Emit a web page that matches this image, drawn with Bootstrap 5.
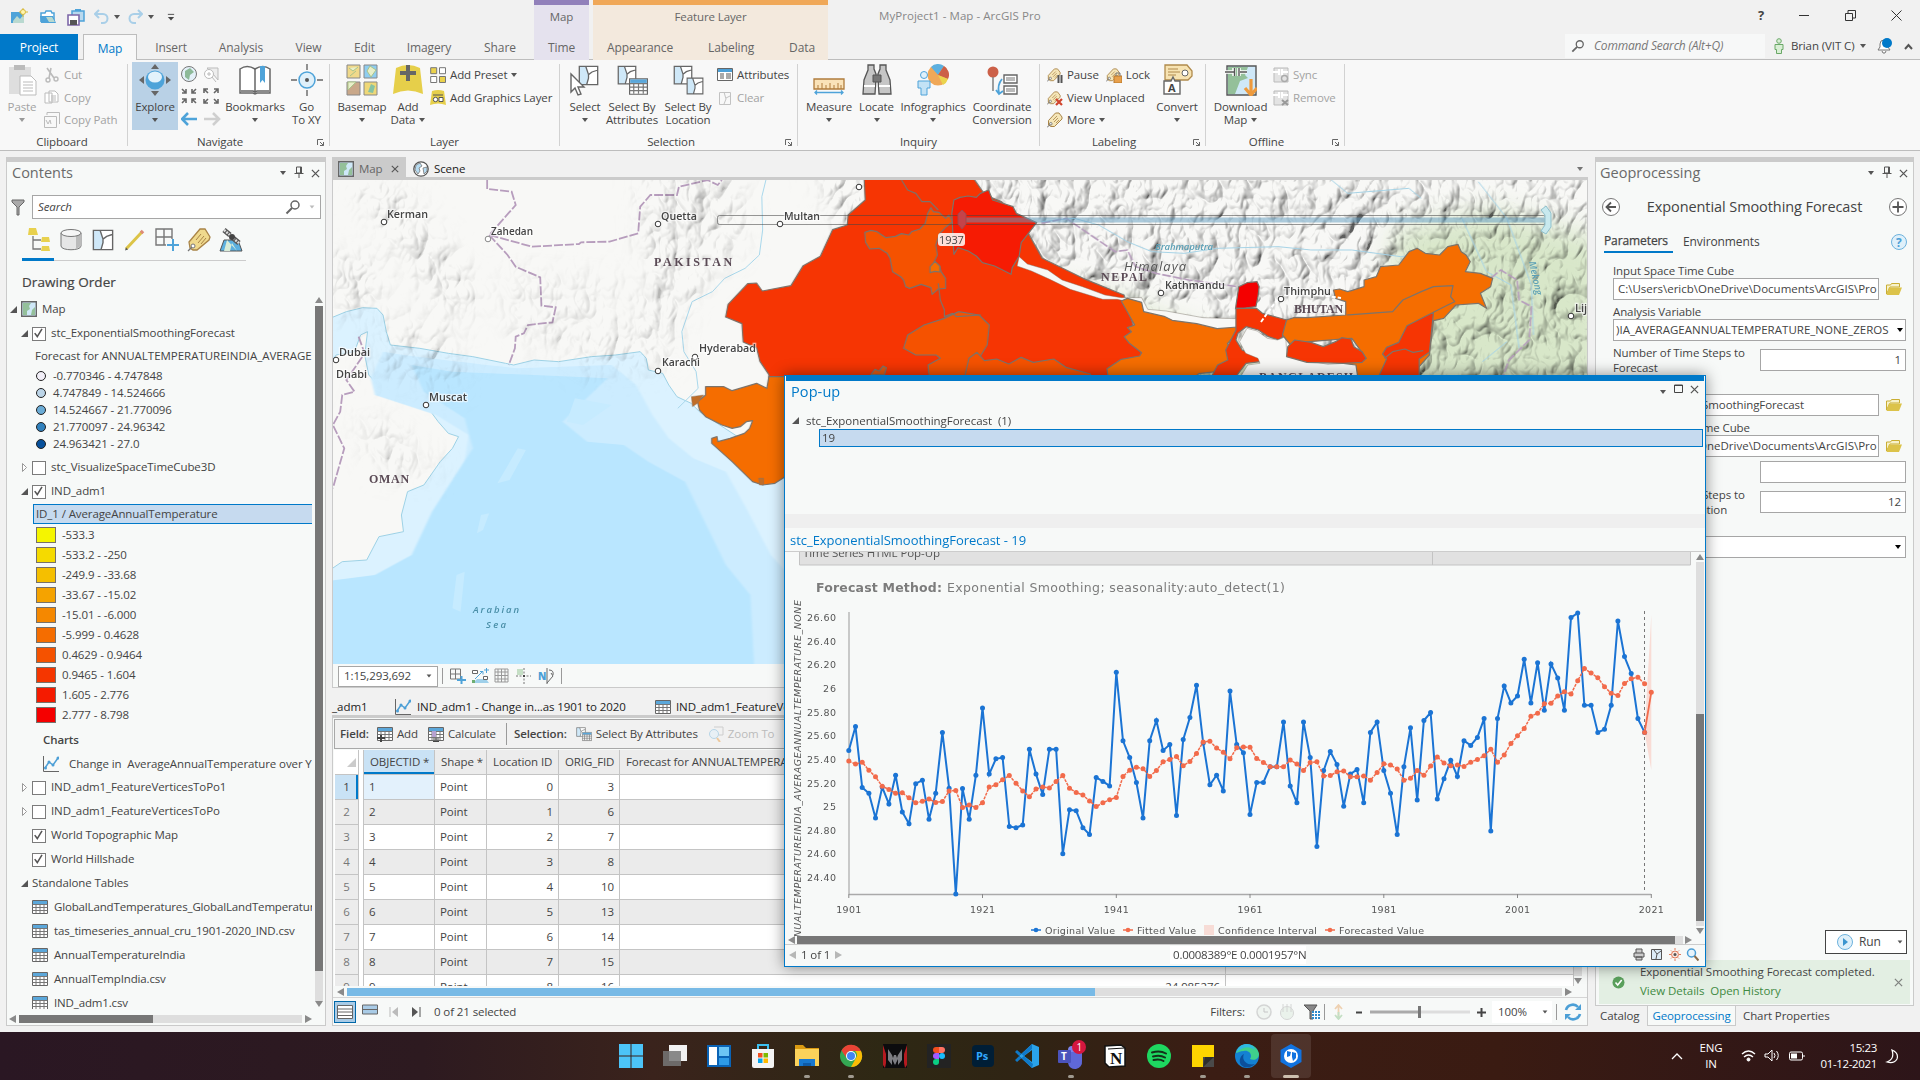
<!DOCTYPE html>
<html lang="en">
<head>
<meta charset="utf-8">
<title>MyProject1 - Map - ArcGIS Pro</title>
<link href="https://cdn.jsdelivr.net/npm/bootstrap@5.3.0/dist/css/bootstrap.min.css" rel="stylesheet">
<script src="https://cdn.jsdelivr.net/npm/bootstrap@5.3.0/dist/js/bootstrap.bundle.min.js"></script>
<style>
:root{--ink:#444;--blue:#0079c9;--line:#cacaca;--pane:#f7f9f8}
html,body{width:1920px;height:1080px;overflow:hidden}
body{background:#f1f1f1;font:11.5px/14px "Open Sans","Noto Sans",sans-serif;color:var(--ink);letter-spacing:-.1px;white-space:nowrap}
svg{display:block;flex:none}
.i16{width:16px;height:16px}.i24{width:24px;height:24px}.i32{width:32px;height:32px}
.caret{width:0;height:0;border:3.5px solid transparent;border-top:4px solid #555;border-bottom:0;flex:none}
.caret-up{width:0;height:0;border:4px solid transparent;border-bottom:6px solid #8a8a8a;border-top:0;flex:none}
.caret-dn{width:0;height:0;border:4px solid transparent;border-top:6px solid #8a8a8a;border-bottom:0;flex:none}
.caret-lt{width:0;height:0;border:4px solid transparent;border-right:7px solid #8a8a8a;border-left:0;flex:none}
.caret-rt{width:0;height:0;border:4px solid transparent;border-left:7px solid #8a8a8a;border-right:0;flex:none}
.gone{color:#a3a3a3}
/* title and tab strip */
.titlebar{height:34px}
.quick{width:534px;padding-left:10px}
.tabstrip{height:26px;border-bottom:1px solid #bdbdbd;font-size:12px;color:#666}
.tabstrip>span{height:26px;display:flex;align-items:center;justify-content:center;padding-top:2px}
.tab-project{background:var(--blue);color:#fff;width:78px}
.tab-map{width:54px;margin-left:5px;background:#f8f8f8;border:1px solid #bdbdbd;border-bottom:0;color:var(--blue)}
.ctx-map{background:#e5e2ee;border-top:5px solid #9180ba;width:55px;height:34px}
.ctx-feat{background:#f3e9dd;border-top:5px solid #f0a858;width:235px;height:34px;margin-left:4px}
.cmd{background:#f7f8f8;width:200px;height:24px;color:#777;font-style:italic;padding-left:6px}
/* ribbon */
.ribbon{height:91px;background:#f8f8f8;border-bottom:1px solid #bdbdbd}
.rgroup{position:relative;height:82px;margin-top:4px;border-right:1px solid #d2d2d2;flex:none}
.rgroup .cap{position:absolute;left:0;right:0;bottom:-3px;text-align:center}
.rgroup .launch{position:absolute;right:5px;bottom:0;width:7px;height:7px}
.rbtn{display:flex;flex-direction:column;align-items:center;text-align:center;line-height:13px;height:68px;flex:none}
.rbtn svg{margin-bottom:4px}
.rbtn .caret{margin-top:5px}
.rcol{flex:none}
.rline{height:22.5px;display:flex;align-items:center;gap:4px}
/* panes */
.pane{background:var(--pane);border:1px solid var(--line);border-top:5px solid #cbcbcb}
.pane-title{font-size:14.5px;color:#6a6a6a;height:22px;letter-spacing:0}
.toc-row{display:flex;align-items:center;height:24px;flex:none}
.chk{width:14px;height:14px;border:1.5px solid #7b7b7b;background:#fff;margin:1px 5px 0 4px;flex:none}
.tw{width:7px;height:7px;flex:none}
.swatch{width:20px;height:16px;border:1px solid #77706a;margin-right:6px}
.dot{width:10px;height:10px;border-radius:50%;border:1.5px solid #222;margin-right:7px}
.fld{background:#fff;border:1px solid #a6a6a6;height:22px;display:flex;align-items:center;overflow:hidden}
.vsep{width:1px;height:16px;background:#9a9a9a;flex:none}
/* attribute table */
.grid{display:grid;grid-template-columns:24px 5px 71px 52px 72px 61px 606px 1fr;grid-auto-rows:25px}
.grid>div{border-right:1px solid #c4c4c4;border-bottom:1px solid #c4c4c4;display:flex;align-items:center;padding:0 5px}
/* popup */
.popwin{position:absolute;left:784px;top:375px;width:922px;height:592px;background:var(--pane);border:1px solid var(--blue);box-shadow:0 0 14px rgba(0,0,0,.45)}
/* taskbar */
.taskbar{height:48px;background:linear-gradient(90deg,#2a1723 0,#2d1a20 22%,#3a231c 34%,#2e2814 46%,#2f2414 53%,#3b1d14 63%,#3a1b12 78%,#2d1519 100%);color:#fff}
.tb{width:44px;height:44px;position:relative;display:flex;align-items:center;justify-content:center}
.tb svg{width:24px;height:24px}
.tb.run::after{content:"";position:absolute;bottom:0;width:6px;height:3px;border-radius:2px;background:#a09a90}
.tb.on{background:rgba(255,255,255,.1);border-radius:4px;width:40px;margin:0 2px}
.tb.on::after{width:16px;background:#cdbfae}
</style>
</head>
<body class="d-flex flex-column">
<svg width="0" height="0" style="position:absolute">
<defs>
<symbol id="tbl" viewBox="0 0 16 16"><path d="M.5 1.5h15v13H.5z" fill="#fff" stroke="#666"/><path d="M1 2h14v3H1z" fill="#5ba7da"/><path d="M.5 5.5h15M.5 8.5h15M.5 11.500h15M4 5v9M8 5v9M12 5v9" stroke="#777" fill="none"/></symbol>
<symbol id="mapi" viewBox="0 0 16 16"><path d="M.7.7h14.600v14.600H.7z" fill="#cfe8f8" stroke="#666" stroke-width="1.400"/><path d="M2 2h8l-2 3 1 3-3 2v4H2z" fill="#94c09a"/><path d="M11 9l3-3v8h-4z" fill="#94c09a"/></symbol>
<symbol id="poly" viewBox="0 0 24 24"><path d="M1.500 1.500h21v21h-21z" fill="#fff"/><path d="M1.500 1.500h8l2 9 1 4-2 8h-9z" fill="#cfe8f8"/><path d="M1.500 1.500h21v21h-21zM9 2l3 9v4l-2 7M12 11l4-3 6-2" fill="none" stroke="#666" stroke-width="1.500"/></symbol>
<symbol id="pin" viewBox="0 0 10 12"><path d="M2.500 1h5v6h-5zM.5 7.500h9M5 7.500V12M6.500 1v6" stroke="#555" fill="none"/></symbol>
<symbol id="x" viewBox="0 0 10 10"><path d="M1 1l8 8M9 1l-8 8" stroke="#555" stroke-width="1.400"/></symbol>
<symbol id="launch" viewBox="0 0 7 7"><path d="M.5 6V.5H6M3 3l3.500 3.500M6.500 3v3.500H3" stroke="#666" fill="none"/></symbol>
<symbol id="mag" viewBox="0 0 16 16"><circle cx="10" cy="6" r="4" fill="none" stroke="#666" stroke-width="1.500"/><path d="M7 9l-5.500 5.500" stroke="#666" stroke-width="2"/></symbol>
<symbol id="line" viewBox="0 0 16 16"><path d="M.5 0v15.500H16" stroke="#666" fill="none"/><path d="M2 12l4-6 4 3 5-7" stroke="#4c9fd6" stroke-width="1.500" fill="none"/><g fill="#4c9fd6"><circle cx="2.500" cy="12" r="1.500"/><circle cx="6" cy="6" r="1.500"/><circle cx="10" cy="9" r="1.500"/><circle cx="15" cy="2" r="1.500"/></g></symbol>
<symbol id="tag" viewBox="0 0 16 16"><path d="M1.500 13V8.500l7-7.500H12l3 4v2l-7.500 7.500H4z" fill="#f5e6b8" stroke="#a98447"/><path d="M6 8l4-4M7 10l4-4M9 11l3-3" stroke="#a98447" stroke-width=".8"/><circle cx="3.800" cy="11.800" r="1.300" fill="#fff" stroke="#666" stroke-width=".8"/><path d="M0 15.500l3-3" stroke="#666"/></symbol>
<symbol id="fold" viewBox="0 0 16 12"><path d="M.5 11V2h4l1-1.500h8V4H4z" fill="#f7f2cb" stroke="#c9ae34"/><path d="M3 4.500h13L13 12H.5z" fill="#dcc34a"/></symbol>
<symbol id="tri" viewBox="0 0 7 7"><path d="M7 0v7H0z" fill="#555"/></symbol>
<symbol id="tro" viewBox="0 0 7 9"><path d="M1.500.5v8l4-4z" fill="#fff" stroke="#999"/></symbol>
<symbol id="ck" viewBox="0 0 14 14"><path d="M2 6l3 4L10.500 1" fill="none" stroke="#555" stroke-width="1.800"/></symbol>
<symbol id="globe" viewBox="0 0 16 16"><circle cx="8" cy="8" r="7.200" fill="#fff" stroke="#555" stroke-width="1.300"/><path d="M3 4l4-2 2 3-3 2 1 3-2 3-3-4zM10 7l4-1v4l-3 3z" fill="#b7dcf2" stroke="#777" stroke-width=".8"/></symbol>
</defs>
</svg>

<!-- Title bar with contextual tab headings -->
<header class="titlebar d-flex flex-none">
  <div class="quick d-flex align-items-center">
    <svg width="18" height="18" viewBox="0 0 18 18"><path d="M1 4h13v11H1z" fill="#4ea3d9"/><path d="M3 13l4-5 3 3 4-5v9H3z" fill="#b9d9d0"/><circle cx="13" cy="4" r="2.500" fill="#fff5b0" stroke="#d8b93a"/><path d="M13 0v2M13 7v2M9 4h2M16 4h2" stroke="#d8b93a"/></svg>
    <svg style="margin-left:11px" width="18" height="18" viewBox="0 0 18 18"><path d="M2 14V5h4l1-2h5l1 2h2v9" fill="#fff" stroke="#4ea3d9" stroke-width="1.500"/><path d="M1 8h13l3 7H2z" fill="#4ea3d9"/><path d="M7 9h6l3 5h-6z" fill="#b9d9d0"/></svg>
    <svg style="margin-left:9px" width="20" height="18" viewBox="0 0 20 18"><path d="M6 3h12v10H6z" fill="#b9d9ee" stroke="#4ea3d9" stroke-width="1.500"/><path d="M9 1h6v2H9z" fill="#4ea3d9"/><path d="M2 7h11v10H2z" fill="#fff" stroke="#7d67a8" stroke-width="1.600"/><path d="M4 12h7v5H4z" fill="#555"/></svg>
    <svg class="ms-2" width="15" height="16" viewBox="0 0 15 16"><path d="M1 5h8a4 4 0 010 9H7M5 1L1 5l4 4" fill="none" stroke="#a9cfe8" stroke-width="2"/></svg>
    <span class="caret" style="margin-left:5px"></span>
    <svg class="ms-2" width="15" height="16" viewBox="0 0 15 16"><path d="M14 5H6a4 4 0 000 9h2M10 1l4 4-4 4" fill="none" stroke="#a9cfe8" stroke-width="2"/></svg>
    <span class="caret" style="margin-left:5px"></span>
    <svg style="margin-left:13px" width="8" height="9" viewBox="0 0 9 9"><path d="M1 1h7" stroke="#444"/><path d="M1 4h7L4.500 8z" fill="#444"/></svg>
  </div>
  <div class="ctx-map d-flex justify-content-center" style="color:#666;padding-top:5px">Map</div>
  <div class="ctx-feat d-flex justify-content-center" style="color:#666;padding-top:5px">Feature Layer</div>
  <div class="d-flex align-items-center" style="color:#888;margin-left:51px;padding-bottom:2px;letter-spacing:.05px">MyProject1 - Map - ArcGIS Pro</div>
  <div class="ms-auto d-flex align-items-center" style="gap:35px;padding:0 18px 4px 0">
    <b style="font-size:13px">?</b>
    <svg width="11" height="11"><path d="M0 5.500h10" stroke="#333"/></svg>
    <svg width="11" height="11"><path d="M.5 3.500h7v7h-7zM3 3V.5h7.500V8H8" fill="none" stroke="#333"/></svg>
    <svg width="11" height="11"><path d="M.5.5l10 10M10.500.5l-10 10" stroke="#333"/></svg>
  </div>
</header>
<nav class="tabstrip d-flex flex-none">
  <span class="tab-project">Project</span><span class="tab-map">Map</span>
  <span style="width:68px">Insert</span><span style="width:72px">Analysis</span><span style="width:63px">View</span><span style="width:49px">Edit</span><span style="width:80px">Imagery</span><span style="width:62px">Share</span><span style="width:3px"></span>
  <span style="width:55px;background:#e5e2ee">Time</span>
  <span style="width:235px;margin-left:4px;background:#f3e9dd;justify-content:space-between;padding:2px 13px 0 14px"><i class="fst-normal">Appearance</i><i class="fst-normal">Labeling</i><i class="fst-normal">Data</i></span>
  <div class="cmd ms-auto d-flex align-items-center" style="letter-spacing:-.2px"><svg style="width:14px;height:16px;margin-right:9px"><use href="#mag"/></svg>Command Search (Alt+Q)</div>
  <div class="d-flex align-items-center" style="width:155px;height:24px;padding-left:9px;color:#444;font-size:11.500px">
    <svg width="10" height="16" viewBox="0 0 10 16" class="me-1"><circle cx="5" cy="3" r="2.300" fill="#d9efd5" stroke="#6aa867"/><path d="M1 6.500h8v5H7.500v4h-5v-4H1z" fill="#d9efd5" stroke="#6aa867"/></svg>
    &nbsp;Brian (VIT C)<span class="caret" style="margin-left:6px"></span>
    <svg width="17" height="16" viewBox="0 0 17 16" style="margin-left:10px"><path d="M2 12l2-3V6a4 4 0 018 0v3l2 3zM6 13l1 2h2l1-2" fill="#fff" stroke="#777"/><circle cx="11" cy="5" r="5" fill="#0079c9"/></svg>
    <svg width="9" height="7" viewBox="0 0 9 7" style="margin-left:11px"><path d="M1 6l3.500-4L8 6" fill="none" stroke="#555" stroke-width="2"/></svg>
  </div>
</nav>

<!-- Ribbon -->
<section class="ribbon d-flex flex-none">
  <div class="rgroup d-flex" style="width:128px">
    <div class="rbtn gone" style="width:40px;margin-left:2px"><svg class="i32" viewBox="0 0 32 32"><path d="M3 3h22v27H3z" fill="#dedede"/><path d="M8 1h11v5H8z" fill="#bbb"/><path d="M14 12h11l5 5v14H14z" fill="#fff" stroke="#bbb"/><path d="M17 18h10M17 21h10M17 24h10M17 27h10" stroke="#bbb"/></svg>Paste<i class="caret" style="border-top-color:#999"></i></div>
    <div class="rcol gone" style="margin-left:2px">
      <div class="rline"><svg class="i16" viewBox="0 0 16 16"><path d="M3 1l7 10M7 1L5 11" stroke="#bbb" stroke-width="1.600"/><circle cx="4" cy="13" r="2" fill="none" stroke="#bbb" stroke-width="1.400"/><circle cx="12" cy="12" r="2" fill="none" stroke="#bbb" stroke-width="1.400"/></svg>Cut</div>
      <div class="rline"><svg class="i16" viewBox="0 0 16 16"><path d="M1 3h7v10H1zM5 1h6l3 3v8H5z" fill="#fff" stroke="#bbb"/><path d="M7 6h5M7 8h5M7 10h5" stroke="#bbb"/></svg>Copy</div>
      <div class="rline"><svg class="i16" viewBox="0 0 16 16"><path d="M.5 4.500h12v11H.5zM3 3V.5h12.500V12" fill="none" stroke="#bbb"/><path d="M2 8l2 4 2-4 1 4" stroke="#bbb" fill="none"/></svg>Copy Path</div>
    </div>
    <div class="cap" style="right:3px">Clipboard</div>
  </div>
  <div class="rgroup d-flex" style="width:202px">
    <div class="rbtn" style="width:46px;margin-left:4px;background:#b9d1e6;margin-top:-2px;padding-top:2px"><svg class="i32" viewBox="0 0 32 32"><circle cx="16" cy="16" r="9.500" fill="#4ea3d9"/><ellipse cx="16" cy="13" rx="7" ry="5.500" fill="#e3f2fb"/><path d="M12 5h8l-4-5zM12 27h8l-4 5zM5 12v8l-5-4zM27 12v8l5-4z" fill="#666"/></svg>Explore<i class="caret"></i></div>
    <div class="rcol" style="width:46px;padding:2px 0 0 3px">
      <svg width="40" height="62" viewBox="0 0 40 62"><circle cx="8" cy="8" r="7.500" fill="#e3f0f8" stroke="#777"/><path d="M4 5l5-3 4 4-4 3-1 5-4-3z" fill="#8cb998"/><path d="M26 2h11v12l-5-6z" fill="#eee" stroke="#bbb"/><circle cx="28" cy="8" r="4.500" fill="#fff" stroke="#bbb"/><path d="M31 11l4 5M26 8h4M28 6v4" stroke="#bbb"/>
      <g stroke="#666" stroke-width="1.600" fill="none"><path d="M1 23l4 4M5 23v4H1M15 23l-4 4M11 23v4h4M1 37l4-4M1 33h4v4M15 37l-4-4M15 33h-4v4"/><path d="M23 23l4 4M23 27v-4h4M37 23l-4 4M33 23h4v4M23 37l4-4M23 33v4h4M37 37l-4-4M33 37h4v-4"/></g>
      <path d="M16 53H2M7 47l-6 6 6 6" stroke="#4ea3d9" stroke-width="2.600" fill="none"/><path d="M23 53h14M32 47l6 6-6 6" stroke="#cfcfcf" stroke-width="2.600" fill="none"/></svg>
    </div>
    <div class="rbtn" style="width:62px"><svg class="i32" viewBox="0 0 32 32"><path d="M1 29V5q7-5 15 0 8-5 15 0v24H18l-2 1-2-1z" fill="#fff" stroke="#666" stroke-width="1.500"/><path d="M16 5v24M2 27h12l2 1 2-1h12" stroke="#666" stroke-width="1.500"/><path d="M21 2h5v17l-2.500-3-2.500 3z" fill="#4ea3d9"/></svg>Bookmarks<i class="caret"></i></div>
    <div class="rbtn" style="width:41px"><svg class="i32" viewBox="0 0 32 32"><circle cx="16" cy="16" r="8" fill="#dff0fa" stroke="#4ea3d9" stroke-width="1.500"/><circle cx="16" cy="16" r="2" fill="#555"/><path d="M16 0v6M16 26v6M0 16h6M26 16h6" stroke="#666" stroke-width="1.400"/></svg>Go<br>To XY</div>
    <div class="cap" style="right:17px">Navigate</div><svg class="launch"><use href="#launch"/></svg>
  </div>
  <div class="rgroup d-flex" style="width:230px">
    <div class="rbtn" style="width:52px;margin-left:6px"><svg class="i32" viewBox="0 0 32 32"><g stroke="#888"><path d="M1 1h13v13H1z" fill="#f0d98a"/><path d="M18 1h13v13H18z" fill="#8fcdf0"/><path d="M1 18h13v13H1z" fill="#c9a88a"/><path d="M18 18h13v13H18z" fill="#efd878"/></g><path d="M3 4l4 3 5-4M4 12l6-5M24 2l-3 5 4 6 5-7zM2 18h8l-8 8z" stroke="#a9c48a" fill="#e8efc9"/><path d="M22 28l3-8 4 2-2 7z" fill="#86c3a4"/></svg>Basemap<i class="caret"></i></div>
    <div class="rbtn" style="width:40px"><svg class="i32" viewBox="0 0 32 32"><path d="M4 4q12-6 24 0l3 26q-15-7-30 0z" fill="#e6cf4a"/><path d="M16 1v16M8 9h16" stroke="#666" stroke-width="4"/></svg>Add<span class="d-flex">Data<i class="caret ms-1"></i></span></div>
    <div class="rcol" style="margin-left:2px">
      <div class="rline"><svg class="i16" viewBox="0 0 16 16"><path d="M.7.7h6v6h-6zM9.500 9.500h6v6h-6z" fill="#ebd24c" stroke="#777"/><path d="M9.500.7h6v6h-6zM.7 9.500h6v6h-6z" fill="#fff" stroke="#777"/></svg>Add Preset <i class="caret"></i></div>
      <div class="rline"><svg class="i16" viewBox="0 0 16 16"><path d="M2 1q6-2 12 0l2 14q-8-3-16 0z" fill="#e6cf4a"/><path d="M3 5h10" stroke="#555"/><circle cx="5.500" cy="9.500" r="2.200" fill="#fff" stroke="#555"/><path d="M9 7.500h4v4H9z" fill="#fff" stroke="#555"/></svg>Add Graphics Layer</div>
    </div>
    <div class="cap">Layer</div>
  </div>
  <div class="rgroup d-flex" style="width:238px">
    <div class="rbtn" style="width:40px;margin-left:5px"><svg class="i32" viewBox="0 0 32 32"><use href="#poly" x="9" y="1" width="21" height="21"/><path d="M2 10v18l4-4 3 7 3-1-3-7h6z" fill="#fff" stroke="#666" stroke-width="1.400"/></svg>Select<i class="caret"></i></div>
    <div class="rbtn" style="width:54px"><svg class="i32" viewBox="0 0 32 32"><use href="#poly" x="1" y="1" width="20" height="20"/><use href="#tbl" x="13" y="13" width="19" height="19"/></svg>Select By<br>Attributes</div>
    <div class="rbtn" style="width:58px"><svg class="i32" viewBox="0 0 32 32"><use href="#poly" x="1" y="1" width="20" height="20"/><use href="#poly" x="14" y="13" width="18" height="18"/></svg>Select By<br>Location</div>
    <div class="rcol">
      <div class="rline"><svg class="i16" viewBox="0 0 16 16"><path d="M.5 1.500h15v12H.5z" fill="#fff" stroke="#666"/><path d="M1 2h14v3H1z" fill="#4c9fd6"/><path d="M3 7h4M9 7h5M3 9h4M9 9h5M3 11h4M9 11h5" stroke="#555"/></svg>Attributes</div>
      <div class="rline gone"><svg class="i16" viewBox="0 0 16 16"><path d="M2.500 2.500h11v12h-11zM7 2l2 7-2 5M9 8l4-2" fill="none" stroke="#c2c2c2"/></svg>Clear</div>
    </div>
    <div class="cap" style="right:15px">Selection</div><svg class="launch"><use href="#launch"/></svg>
  </div>
  <div class="rgroup d-flex" style="width:242px">
    <div class="rbtn" style="width:52px;margin-left:5px"><svg class="i32" viewBox="0 0 32 32"><path d="M1 15h30v10H1z" fill="#fae3b9" stroke="#b07c3c" stroke-width="1.300"/><path d="M5 25v-4M9 25v-6M13 25v-4M17 25v-6M21 25v-4M25 25v-6M28 25v-4" stroke="#b07c3c"/><path d="M2 28.500h28M4 26.500l-2 2 2 2M28 26.500l2 2-2 2" fill="none" stroke="#4ea3d9" stroke-width="1.300"/></svg>Measure<i class="caret"></i></div>
    <div class="rbtn" style="width:43px"><svg class="i32" viewBox="0 0 32 32"><path d="M7 1h6v4l2 5v4l-1 16H2l1-14 4-10zM25 1h-6v4l-2 5v4l1 16h12l-1-14-4-10z" fill="#c6c6c6" stroke="#555" stroke-width="1.300"/><path d="M12 11h8v7h-8z" fill="#777" stroke="#555"/><path d="M3 22h11M18 22h11" stroke="#fff" stroke-width="2"/></svg>Locate<i class="caret"></i></div>
    <div class="rbtn" style="width:70px"><svg class="i32" viewBox="0 0 32 32"><circle cx="21" cy="11" r="10.500" fill="#f0a858"/><path d="M21 11L14 3a10 10 0 0113-1z" fill="#5cb0e0"/><path d="M21 11l6-9a10 10 0 014 13z" fill="#cc6048"/><path d="M21 11l10 4a10 10 0 01-5 6z" fill="#ead44e"/><circle cx="7" cy="11" r="3.500" fill="#dff0fa" stroke="#4ea3d9"/><path d="M1 17h12v7h-3v7H4v-7H1z" fill="#c3e2f5" stroke="#4ea3d9"/></svg>Infographics<i class="caret"></i></div>
    <div class="rbtn" style="width:68px"><svg class="i32" viewBox="0 0 32 32"><circle cx="7" cy="8" r="5.500" fill="#cc6048"/><path d="M7 13v14" stroke="#777" stroke-width="1.400"/><path d="M18 11h13v8H18zM18 22h13v8H18z" fill="#fff" stroke="#666" stroke-width="1.400"/><path d="M20 14h9M20 16h9M20 25h9M20 27h9" stroke="#777"/><path d="M16 15q-5 6-3 14M10 26l3 4 4-3" fill="none" stroke="#4ea3d9" stroke-width="1.800"/></svg>Coordinate<br>Conversion</div>
    <div class="cap">Inquiry</div>
  </div>
  <div class="rgroup d-flex" style="width:166px">
    <div class="rcol" style="margin-left:7px;width:105px">
      <div class="rline"><svg class="i16" viewBox="0 0 16 16"><use href="#tag" width="14" height="16"/><path d="M11.500 8v8M14.500 8v8" stroke="#555" stroke-width="2"/></svg>Pause<svg class="i16" style="margin-left:3px" viewBox="0 0 16 16"><use href="#tag" width="14" height="16"/><path d="M8 9h8v7H8z" fill="#e8a04b" stroke="#b8792c"/><path d="M10 9V6h4v3" fill="none" stroke="#777"/></svg>Lock</div>
      <div class="rline"><svg class="i16" viewBox="0 0 16 16"><use href="#tag" width="14" height="16"/><path d="M9 9l6 6M15 9l-6 6" stroke="#d0442c" stroke-width="2.200"/></svg>View Unplaced</div>
      <div class="rline"><svg class="i16"><use href="#tag"/></svg>More <i class="caret"></i></div>
    </div>
    <div class="rbtn" style="width:50px"><svg class="i32" viewBox="0 0 32 32"><path d="M4 1h22l5 6v5l-4 4H4z" fill="#f7e3b2" stroke="#b08a4c" stroke-width="1.300"/><path d="M7 5h10M7 8h12M7 11h8" stroke="#b08a4c"/><circle cx="24" cy="9" r="3" fill="#fff" stroke="#666"/><path d="M3 17h7l2-4 2 4h5v13H3z" fill="#fff" stroke="#666" stroke-width="1.400"/><text x="7" y="28" font-size="11" font-weight="700" fill="#444">A</text></svg>Convert<i class="caret"></i></div>
    <div class="cap" style="right:17px">Labeling</div><svg class="launch"><use href="#launch"/></svg>
  </div>
  <div class="rgroup d-flex" style="width:139px">
    <div class="rbtn" style="width:59px;margin-left:5px"><svg class="i32" viewBox="0 0 32 32"><path d="M2 2h29v29H2z" fill="#cfe8f8" stroke="#555" stroke-width="1.400"/><path d="M3 3h20l-3 8 3 3-8 3-5 13H3z" fill="#94c09a"/><path d="M0 8h9M15 8h7M9 4v8M14 4v8" stroke="#fff" stroke-width="3.500"/><path d="M0 8h9M15 8h7M9.500 4v8M14 4v8" stroke="#555" stroke-width="1.400"/><path d="M26 15v15M20 24l6 7 6-7" fill="none" stroke="#ee9a3d" stroke-width="3.200"/></svg>Download<span class="d-flex">Map<i class="caret ms-1"></i></span></div>
    <div class="rcol gone" style="margin-left:3px">
      <div class="rline"><svg class="i16" viewBox="0 0 16 16"><path d="M1 1h14v14H1z" fill="#e3e3e3" stroke="#bbb"/><path d="M0 5h6M10 5h5M6 2v6M9 2v6" stroke="#fff" stroke-width="2"/><circle cx="11.500" cy="11.500" r="3" fill="none" stroke="#aaa" stroke-width="1.400"/></svg>Sync</div>
      <div class="rline"><svg class="i16" viewBox="0 0 16 16"><path d="M1 1h14v14H1z" fill="#e3e3e3" stroke="#bbb"/><path d="M0 5h6M10 5h5M6 2v6M9 2v6" stroke="#fff" stroke-width="2"/><path d="M9 10l6 5M15 10l-6 5" stroke="#999" stroke-width="2"/></svg>Remove</div>
    </div>
    <div class="cap" style="right:17px">Offline</div><svg class="launch"><use href="#launch"/></svg>
  </div>
</section>

<main class="d-flex" style="height:881px;padding:6px 6px 0 6px;flex:none">
  <!-- Contents pane -->
  <aside class="pane d-flex flex-column" style="width:320px;height:869px">
    <div class="d-flex align-items-center pane-title" style="padding:0 5px 0 5px">Contents
      <i class="caret ms-auto"></i><svg class="ms-2" width="10" height="12" style="margin-top:-3px"><use href="#pin"/></svg><svg style="margin-left:7px" width="9" height="9"><use href="#x"/></svg></div>
    <div class="d-flex align-items-center" style="margin:11px 4px 0 4px">
      <svg width="14" height="17" viewBox="0 0 14 17" style="margin-right:3px"><path d="M1 1h12v2L8 8v8H6V8L1 3z" fill="#aaa" stroke="#666"/></svg>
      <div class="fld flex-grow-1 ms-1" style="height:24px;padding:0 5px 0 5px;font-style:italic">Search<svg class="i16 ms-auto" style="margin-right:8px"><use href="#mag"/></svg><i class="caret" style="transform:scale(.8);opacity:.4"></i></div>
    </div>
    <div class="d-flex" style="margin:9px 0 0 20px;gap:8px">
      <svg class="i24" viewBox="0 0 24 24"><path d="M2 0h7l2 7H1zM15 9h7l1 5h-9zM15 18h7l1 5h-9z" fill="#e8d14e"/><path d="M6 8v13h8M6 12h8" fill="none" stroke="#777" stroke-width="1.300"/></svg>
      <svg class="i24" viewBox="0 0 24 24"><path d="M2 5v13c0 5 20 5 20 0V5" fill="#e6e6e6" stroke="#777"/><path d="M17 8v13l5-3V5z" fill="#bbb"/><ellipse cx="12" cy="5" rx="10" ry="3.500" fill="#f6f6f6" stroke="#777"/></svg>
      <svg class="i24" viewBox="0 0 24 24"><use href="#poly" x="1" y="1" width="22" height="22"/></svg>
      <svg class="i24" viewBox="0 0 24 24"><path d="M3 21L19 4" stroke="#dcc447" stroke-width="3"/><path d="M18 5l2-2" stroke="#dd8a78" stroke-width="3.500"/><path d="M2 22.500l3-1-2-2z" fill="#555"/></svg>
      <svg class="i24" viewBox="0 0 24 24"><path d="M1 1h16v16H1zM9 1v16M1 9h16" fill="none" stroke="#777" stroke-width="1.400"/><path d="M11 17h13M17.500 11v13" stroke="#f7f9f8" stroke-width="5"/><path d="M12 17h12M18 11v12" stroke="#4ea3d9" stroke-width="2"/></svg>
      <svg class="i24" viewBox="0 0 24 24"><path d="M3 20l-1-6L13 1h5l5 8-1 3L10 22H6z" fill="#efd98d" stroke="#a98447" stroke-width="1.300"/><path d="M9 12l5-6M11 15l6-7M14 16l5-6" stroke="#a98447"/><circle cx="6" cy="18" r="2" fill="#fff" stroke="#777"/><path d="M1 23l4-4" stroke="#777" stroke-width="1.300"/></svg>
      <svg class="i24" viewBox="0 0 24 24"><path d="M5 12h14l4 11H1z" fill="#5cb0e0" stroke="#555"/><path d="M8 12l-3 11h6l2-8 5 8z" fill="#d8ecd8"/><path d="M5 2l6 5M14 10l6 5" stroke="#555" stroke-width="5"/><path d="M5 2l6 5M14 10l6 5" stroke="#ddd" stroke-width="2.500" stroke-dasharray="2 1"/><circle cx="13" cy="9" r="3" fill="#444"/></svg>
    </div>
    <div style="margin:6px 0 0 15px;width:224px;height:3px;border-bottom:1px solid #ccc"><div style="width:32px;height:3px;background:var(--blue)"></div></div>
    <div style="margin:12px 0 0 15px;font-size:13.500px;line-height:18px;letter-spacing:.05px;-webkit-text-stroke:.2px">Drawing Order</div>
    <div class="d-flex" style="margin-top:6px;height:712px">
      <div class="overflow-hidden" style="width:305px;padding-left:3px" id="toc"></div>
      <div class="d-flex flex-column align-items-center ms-auto" style="width:8px;margin-right:2px"><i class="caret-up"></i><div style="width:8px;height:665px;margin-top:3px;background:#777"></div><div style="width:8px;height:30px;background:#dedede"></div><i class="caret-dn"></i></div>
    </div>
    <div class="d-flex align-items-center" style="height:9px;padding-left:2px;margin-top:5px"><i class="caret-lt"></i><div style="width:134px;height:8px;margin-left:3px;background:#777"></div><div style="width:149px;height:8px;background:#dedede;margin-right:3px"></div><i class="caret-rt"></i></div>
  </aside>

  <!-- Map view and attribute table -->
  <section class="d-flex flex-column" style="width:1256px;margin-left:6px">
    <div class="d-flex align-items-center" style="height:20px;font-size:11.500px;color:#222">
      <div class="d-flex align-items-center" style="width:74px;height:20px;background:#cbcbcb;color:#666;padding:3px 0 0 6px"><svg class="i16"><use href="#mapi"/></svg><span style="margin:0 9px 0 5px">Map</span><svg width="8" height="8"><use href="#x"/></svg></div>
      <svg class="i16" style="margin:3px 5px 0 7px"><use href="#globe"/></svg><span style="padding-top:3px">Scene</span>
      <i class="caret ms-auto" style="margin:3px 5px 0 0;opacity:.8"></i>
    </div>
    <div style="border:1px solid var(--line);border-top:3px solid #cbcbcb;background:var(--pane);height:511px">
      <svg width="1254" height="484" viewBox="0 0 1254 484">
        <defs>
          <filter id="relief" x="0" y="0" width="100%" height="100%"><feTurbulence type="turbulence" baseFrequency=".035 .025" numOctaves="3" seed="8"/><feDiffuseLighting surfaceScale="11" lighting-color="#fff" diffuseConstant="1.180"><feDistantLight azimuth="225" elevation="58"/></feDiffuseLighting></filter>
          <filter id="soft"><feGaussianBlur stdDeviation="14"/></filter>
          <filter id="soft4"><feGaussianBlur stdDeviation="2"/></filter>
          <mask id="mtn"><g fill="#fff" filter="url(#soft)"><path d="M480-20h800v520H960L790 250 560 140z"/><path d="M10-10l50 10 90 120-30 20z" opacity=".6"/><path d="M60 130l80 40-20 40-90-20z" opacity=".35"/><path d="M310-10h90l10 70-60 60-15 60-90 10 70-60z" opacity=".55"/><path d="M170 90l120 10-30 80-80-20z" opacity=".3"/><path d="M20 230l40 20 50 40-60 0z" opacity=".5"/><path d="M0 80h40v50H0z" opacity=".7"/></g></mask>
        </defs>
        <rect width="1254" height="484" fill="#f8f8f6"/>
        <g filter="url(#soft)" fill="#d0e2be"><path d="M690 100l90 20 150 60 60 30 80-10 40 40-260-10-110-70z"/><path d="M1060 50l100-20 114 30v424h-220z" opacity=".8"/><path d="M1100 220l70 10-30 240-90-20z" fill="#c4e6a6"/></g>
        <g transform="translate(-3 -25) scale(.408163 .333333)">
          <path d="M0 490l40-20 40-12 35 2 15 20 8 50 10 40 72 10 70 15 60 10 80 20 20 5 50-15 60 5 80-15 60-5 60-10 15 20 5 35 35 10 15 35 20 35 35 20 20 25 250 200v560H0V1245l30-25 60-5 30-70 60-15-5-50 15-70 40-20 40-70 30-40 15-35-25-10-25-35-30-50-65-15-45-35-30-40-10-60 7-70-17 10-15 50-45 10-8 15z" fill="#dbf2ff" stroke="#9ed2e6" stroke-width="1" vector-effect="non-scaling-stroke"/>
          <path d="M130 590l50 10q200 30 280 40l230-10 60 60 40 90 40 70 60 60 80 40 50 110 60 140 60 80 15 290H-20v-280l140-30 80-40 60-160 70-140 10-80-80-60-150-60-10-50z" fill="#ccecff" filter="url(#soft4)"/>
          <path d="M200 630l100 20 200 10 180 10-60 70-50 60 60 60 90 10 60 50 90 60 40 100 60 150 60 90 10 230H-20v-270l130-20 90-60 50-130 100-190-20-90-100-80z" fill="#b9e6ff" filter="url(#soft4)"/>
          <path d="M460 880l20 5-40 90-30 10zM370 1080l20-5-15 50-15 10zM310 1260l20-10-10 120-20-10zM600 730l90 20-70 60-40-10z" fill="#c6ebff"/>
          <path vector-effect="non-scaling-stroke" fill="none" stroke="#a9d8ec" d="M1068 75l-10 50 2 100-8 75-35 40-50 30-30 40-50 30-25 90 5 60 30 60 5 50-50 60"/>
          <path vector-effect="non-scaling-stroke" fill="none" stroke="#b79dbd" stroke-width="1.800" stroke-dasharray="9 2" d="M385 75v27l60 8 10 40-65 90 105 35 115-8 5-5 70-2 70-25 5-80 25-35 65 0 5-25 70-20 25 15 10-15M390 240l45 60 20 35 60 32 3 85 35 5-8 45-60 8-10 25-20 10-2 35-15 50M70 545l15 50-45 80 20 35-30 10-5 50-18 40 28 70-28 120"/>
        </g>
        <g mask="url(#mtn)" style="mix-blend-mode:multiply"><path d="M0 0h1254v484H520L370 180 310 175 150 185 60 165 40 125 0 140z" filter="url(#relief)" opacity=".62"/></g>
        <g transform="translate(627 -25) scale(.408163 .333333)" fill="none" stroke="#a6d3e6">
          <path vector-effect="non-scaling-stroke" d="M200 200l80-10 60 20 70 50 60 30 80 5 80-15 150-5 80 10 100 0 120 20 60-10M910 75l40 40 150-15 30 30M1270 80l70 110 60 200 5 150M1230 190l60 160 60 40 20 190M1340 560l-60 60M790 560l-5 110"/>
          <path vector-effect="non-scaling-stroke" stroke="#b79dbd" stroke-width="1.600" stroke-dasharray="9 2" d="M200 205l60-15 60 50 60 50 30-5 20 50 50 20 80 20 120 20M1300 370l25-25 40 30 5 60 30 20-5 100-50 60-15 50"/>
        </g>
        <g transform="translate(-3 -25) scale(.408163 .333333)" stroke="#7b746c" stroke-width="1.200" stroke-linejoin="round">
          <!-- main red block -->
          <path vector-effect="non-scaling-stroke" fill="#f63503" d="M1308 60l3 75-42 45-2 30-36 14-30 80-42 28-30 60-70 16-14-24-22 2-48 62-6 38 40 20 3 55 33 18 8 40 22 40v20h920V620l-50-200-100-50-100-60-50-110-50-60-40-20-40-70z"/>
          <path vector-effect="non-scaling-stroke" fill="#f56d00" d="M1075 665L1070 700 1045 685 985 707 965 695 920 695 920 720 900 740 905 765 920 785 960 810 985 820 1005 815 1020 800 1035 797 1028 820 1015 835 980 850 950 860 948 845 935 850 935 865 985 920 1035 980 1060 990 1090 985 1115 965 1160 940V665z"/>
          <path d="M885 725l30-5-15 25-12 10zM1050 970h12v20h-10z" fill="#c06d28"/>
          <path vector-effect="non-scaling-stroke" fill="#f55200" d="M1310 232L1325 226 1340 230 1362 248 1385 244 1400 236 1418 240 1425 230 1445 222 1458 205 1464 175 1472 158 1478 170 1492 172 1508 190 1516 180 1525 200 1510 215 1494 235 1488 255 1484 270 1488 300 1480 320 1494 335 1497 350 1508 370 1508 400 1490 402 1475 418 1472 398 1448 388 1420 400 1410 395 1405 375 1398 365 1378 350 1372 310 1365 295 1345 280 1322 282 1312 262z"/>
          <path vector-effect="non-scaling-stroke" fill="#f56d00" d="M1470 335l12-16 12 14v18l-12-2-12 4z"/>
          <path vector-effect="non-scaling-stroke" fill="#f55200" d="M1590 480l25 30-5 60-30 60-40 60h-70l-5-60 30-20-10-10-50 0-30-20 10-40 40-30 50-20 35-20z"/>
          <path vector-effect="non-scaling-stroke" fill="#f55200" d="M1555 665l10-55 20-18 18 25 30-5 30 15 30-20 30 15 50-10 30 25 60 20v25z"/>
          <path vector-effect="non-scaling-stroke" fill="none" d="M1400 75l15 30 20 10 15 25 20 0 20 25M1490 385l5 50 10 30 0 20 20-10 10 10 60-5"/>
          <path vector-effect="non-scaling-stroke" fill="#e05a12" d="M1325 658l10-15 10 5 10-15 8 5-5 22z"/>
          <g transform="translate(1543.500 0)">
            <path vector-effect="non-scaling-stroke" fill="#f61b03" d="M-20 175l5-40 15-8 20-4 20 4 10-12 20-10 10 30 50 20 8 20 50 28-38 60-5 40-17 35-3 20-40-25-30-10-15-20-20-15-25-10-10 20z"/>
            <path fill="#f8f8f6" d="M145 305l20 22 50 18 35 30 50 20 55 25 40 8 50 0 15 35 45 5 90 20 80 3 10-20 4 40-14 10-75 0-100-30-45-14-15-30-55-14-35 0-80-30-50-30-45-25-35-15z"/>
            <path vector-effect="non-scaling-stroke" fill="#f56d00" d="M395 438l15-8 35 12 5 28 50 14 20 12 60 10 50 15 50-5 5 10-30 40 30 40-30 40-70 10-30 30H365l-5-45 35-28 45-10 5-10-30-28-13-20 18-15-10-12 18-8z"/>
            <path vector-effect="non-scaling-stroke" fill="#f40000" d="M683 395l20-12 25-3 5 15-3 30-5 30-30 5h-20z"/>
            <path vector-effect="non-scaling-stroke" fill="#f63503" d="M676 460h50l15 15 60 20-5 45-15 15-25-10-25-20-30-10-20 20-5 20 15 30 40 20 5 15-35 5-25 40h-60l15-35 25-15-5-30 25-60 0-25z"/>
            <path fill="#f8f8f6" d="M703 520l25 8 25 22 25 5 20-10 3 60 100 23 70-5 5 47H685l20-40 30-5-5-15-30-15-15-35z"/>
            <path vector-effect="non-scaling-stroke" fill="#f56d00" d="M800 495L820 487 850 488 945 480 945 440 920 430 915 405 930 402 950 410 990 395 990 375 1020 365 1030 335 1075 330 1100 290 1120 280 1140 295 1175 300 1195 275 1220 268 1228 290 1240 300 1250 320 1238 350 1275 355 1305 370 1300 395 1275 415 1290 460 1270 445 1215 450 1185 490 1160 497 1150 600 1100 670 975 670 970 630 940 625 995 610 960 550 855 560 810 570 790 540z"/>
            <path vector-effect="non-scaling-stroke" fill="none" d="M948 480L1060 470 1085 435 1130 410 1160 395 1208 392 1202 425 1212 440 1195 450 1160 472"/>
            <path vector-effect="non-scaling-stroke" fill="#f63503" d="M800 605L803 575 820 555 860 562 890 575 920 560 935 548 958 552 965 575 985 590 995 610 985 622 940 625 850 622zM1160 472l-5 60-5 60-25 20v55h-100l20-55-10-15 10-20 30-15 20-50z"/>
            <path vector-effect="non-scaling-stroke" fill="none" d="M1040 610l20-20 30-8 20 10 25-5"/>
          </g>
        </g>
        <path d="M928 142q14-20 20-26l20-3 40 5" fill="none" stroke="#fff" stroke-dasharray="4 2" stroke-width="2"/>
        <!-- time slider -->
        <rect x="384.500" y="35.500" width="828" height="9" rx="2" fill="none" stroke="#444" stroke-opacity=".55"/>
        <path d="M633 37.500h580v5H633z" fill="#5f9cc0" opacity=".5"/><path d="M625 34l4-4 4 4v10l-4 5-4-5z" fill="#c4434a" stroke="#a5474a"/><path d="M1208 30l5-4 5 7v14l-5 7-5-3 4-6V35z" fill="#c8e9ee" stroke="#8fc0cc"/>
        <g fill="#fff" stroke="#333"><circle cx="51" cy="42" r="2.800"/><circle cx="155" cy="59" r="2.800" stroke="#888"/><circle cx="325" cy="44" r="2.800"/><circle cx="447" cy="44" r="2.800"/><circle cx="526" cy="7" r="2.800"/><circle cx="3" cy="180" r="2.800"/><circle cx="93" cy="225" r="2.800"/><circle cx="325" cy="191" r="2.800"/><circle cx="362" cy="177" r="2.800"/><circle cx="828" cy="113" r="2.800"/><circle cx="948" cy="119" r="2.800"/><circle cx="1238" cy="136" r="2.800"/></g>
        <g font-size="11" fill="#444" stroke="#fff" stroke-width="2.500" stroke-opacity=".6" paint-order="stroke" letter-spacing="0" font-weight="600">
          <text x="54" y="38" textLength="41" lengthAdjust="spacingAndGlyphs">Kerman</text><text x="158" y="55" textLength="42" lengthAdjust="spacingAndGlyphs">Zahedan</text><text x="328" y="40" textLength="36" lengthAdjust="spacingAndGlyphs">Quetta</text><text x="451" y="40" textLength="36" lengthAdjust="spacingAndGlyphs">Multan</text><text x="6" y="176" textLength="31" lengthAdjust="spacingAndGlyphs">Dubai</text><text x="3" y="198" textLength="31" lengthAdjust="spacingAndGlyphs">Dhabi</text><text x="96" y="221" textLength="38" lengthAdjust="spacingAndGlyphs">Muscat</text><text x="366" y="172" textLength="57" lengthAdjust="spacingAndGlyphs">Hyderabad</text><text x="329" y="186" textLength="38" lengthAdjust="spacingAndGlyphs">Karachi</text><text x="832" y="109" textLength="60" lengthAdjust="spacingAndGlyphs">Kathmandu</text><text x="951" y="115" textLength="47" lengthAdjust="spacingAndGlyphs">Thimphu</text><text x="1242" y="132">Lij</text>
        </g>
        <g font-family="Liberation Serif,serif" font-weight="700" font-size="12" fill="#5b4b56"><text x="321" y="86" textLength="78">PAKISTAN</text><text x="36" y="303" textLength="40">OMAN</text><text x="768" y="101" textLength="46">NEPAL</text><text x="961" y="133" textLength="49">BHUTAN</text><text x="926" y="201" textLength="94">BANGLADESH</text></g>
        <text x="791" y="91" font-size="13" font-style="italic" fill="#555" textLength="62">Himalaya</text>
        <g font-size="9.500" font-style="italic" font-weight="600" fill="#5a9fb5"><text x="822" y="70" textLength="58">Brahmaputra</text><text x="140" y="433" textLength="46" fill="#4a8fa8">Arabian</text><text x="153" y="448" textLength="20" fill="#4a8fa8">Sea</text><text transform="translate(1196 82) rotate(78)" textLength="34">Mekong</text></g>
        <rect x="605" y="53" width="27" height="13" rx="3" fill="#fff" opacity=".85"/><text x="606" y="64" font-size="11" fill="#444">1937</text>
      </svg>
      <div class="d-flex align-items-center" style="height:24px;padding-left:5px">
        <div class="fld" style="width:100px;height:21px;padding:0 5px">1:15,293,692<i class="caret ms-auto" style="transform:scale(.8)"></i></div>
        <div class="vsep ms-1"></div>
        <svg width="104" height="17" viewBox="0 0 104 17" style="margin:0 7px 0 7px"><path d="M.5 1h10v10H.5zM5.500 1v10M.5 6h10" fill="none" stroke="#777"/><path d="M7 12h9M11.500 8v8" stroke="#4ea3d9" stroke-width="2"/><path d="M23 15l4-4h9l3 4z" fill="#9fd0ea"/><path d="M22.500 2.500h5v3h-5zM33.500 8.500h4v3h-4z" fill="#fff" stroke="#666"/><path d="M25 11l7-7M30 3.500h3v3M34 2h5M36.500 0v5" stroke="#4ea3d9" fill="none"/><path d="M22 12h3v3h-3z" fill="#6fae72"/><path d="M45 1h13v13H45zM45 4h13M45 7.500h13M45 11h13M48 1v13M51.500 1v13M55 1v13" fill="none" stroke="#999"/><path d="M67 1h6v6h-6z" fill="#c5dfc5"/><path d="M66 8h15M74 0v16" stroke="#777" stroke-dasharray="2 1.500"/><path d="M73 7h2v2h-2z" fill="#444"/><text x="88" y="12" font-size="10" font-weight="800" fill="#4c9fd6">N</text><path d="M97 0v16M97 15l6-7M99 2q5 0 4 5M101 5l2 3" stroke="#666" fill="none"/></svg>
        <div class="vsep"></div>
      </div>
    </div>
    <div class="d-flex align-items-center" style="height:27px;color:#222;padding-top:11px"><span style="width:63px;letter-spacing:0">_adm1</span><svg class="i16" style="margin-right:6px"><use href="#line"/></svg><span style="width:238px">IND_adm1 - Change in...as 1901 to 2020</span><svg class="i16" style="margin-right:5px"><use href="#tbl"/></svg>IND_adm1_FeatureVerticesToPo</div>
    <div style="border:1px solid var(--line);border-top:3px solid #cbcbcb;background:var(--pane);height:311px">
      <div class="d-flex align-items-center" style="height:30px;border:1px solid #a8a8a8;background:#f1f1f1;padding-left:5px;margin:1px 0 0 1px">
        <b style="font-weight:600;margin-right:8px">Field:</b><svg class="i16" viewBox="0 0 16 16"><use href="#tbl"/><path d="M0 12h8M4 9v7" stroke="#444" stroke-width="2"/></svg><span style="margin:0 10px 0 4px">Add</span><svg class="i16" viewBox="0 0 16 16"><use href="#tbl"/><path d="M4 5h4v6H4z" fill="#b7a2d0"/><path d="M5 13h6M5 15.500h6" stroke="#444"/></svg><span class="ms-1">Calculate</span>
        <div class="vsep" style="height:22px;margin:0 7px 0 10px"></div><b style="font-weight:600;margin-right:9px">Selection:</b><svg class="i16" viewBox="0 0 16 16"><use href="#poly" width="10" height="12"/><use href="#tbl" x="6" y="5" width="10" height="11"/></svg><span style="margin:0 10px 0 4px">Select By Attributes</span><svg class="i16" viewBox="0 0 16 16" opacity=".5"><path d="M6 1h9v8H9" fill="none" stroke="#aaa"/><circle cx="6" cy="8" r="4.500" fill="#e0f0fa" stroke="#7db9dc"/><path d="M9 12l3 4" stroke="#e8a04b" stroke-width="2"/></svg><span class="ms-1" style="color:#bbb">Zoom To</span>
      </div>
      <div class="d-flex" style="height:236px;margin:1px 2px 0 1px">
        <div class="overflow-hidden flex-grow-1" style="background:#fff"><div class="grid" id="attr" style="width:1239px;margin-left:1px"></div></div>
        <div class="d-flex flex-column align-items-center" style="width:8px;margin-right:3px"><i class="caret-up mt-1"></i><div style="width:8px;height:214px;margin:2px 0;background:#dedede"></div><i class="caret-dn"></i></div>
      </div>
      <div class="d-flex align-items-center" style="height:12px;padding-left:4px;border-bottom:1px solid #d5d5d5"><i class="caret-lt"></i><div style="width:748px;height:8px;margin-left:3px;background:#78bae6"></div><div style="width:467px;height:8px;background:#dedede;margin-right:3px"></div><i class="caret-rt"></i></div>
      <div class="d-flex align-items-center" style="height:27px;padding-left:1px">
        <div style="width:22px;height:22px;background:#a9cbe6;border:1px solid #0067a8;padding:3px 2px"><svg width="16" height="14" viewBox="0 0 16 14"><path d="M.5.5h15v13H.5zM.5 4h15M.5 7h15M.5 10.500h15" fill="#fff" stroke="#666"/></svg></div>
        <svg width="16" height="12" viewBox="0 0 16 12" style="margin:-3px 0 0 6px"><path d="M.5 1h15v9H.5zM.5 5.500h15" fill="#a9cbe6" stroke="#666"/></svg>
        <svg width="10" height="10" viewBox="0 0 10 10" style="margin-left:11px"><path d="M1 0v10" stroke="#bbb"/><path d="M9 0v10L3 5z" fill="#bbb"/></svg>
        <svg width="10" height="10" viewBox="0 0 10 10" style="margin:0 13px 0 12px"><path d="M9 0v10" stroke="#555"/><path d="M1 0v10l6-5z" fill="#555"/></svg>
        0 of 21 selected
        <span style="margin-left:auto">Filters:</span>
        <svg width="74" height="18" viewBox="0 0 74 18" style="margin:0 5px 0 10px"><g opacity=".45"><circle cx="9" cy="9" r="7" fill="#e6efe8" stroke="#aaa" stroke-width="1.500"/><path d="M9 5v4h4" stroke="#888" fill="none"/><circle cx="32" cy="10" r="6.500" fill="#dcebdd" stroke="#aaa"/><path d="M28 1v8M32 1v8M36 1v8" stroke="#aaa"/></g><path d="M49 2h13l-4 6v8h-3V8z" fill="#888" stroke="#555"/><path d="M57 8h8v8h-8z" fill="#fff"/><path d="M57 9h8M57 12h8M57 15h8" stroke="#2e8bcc" stroke-width="2" stroke-dasharray="2 1"/><path d="M69.500 1v16" stroke="#999"/></svg>
        <svg width="9" height="16" viewBox="0 0 9 16" style="margin-right:13px" opacity=".55"><path d="M4.500 1v14M1 5l3.500-4L8 5" fill="none" stroke="#e8b27a" stroke-width="1.800"/><path d="M1 11l3.500 4L8 11M4.500 8v7" fill="none" stroke="#9acb9a" stroke-width="1.800"/></svg>
        <svg width="130" height="16" viewBox="0 0 130 16"><path d="M0 8.500h6M121 8.500h9M125.500 4v9" stroke="#444" stroke-width="2"/><path d="M14 8h50" stroke="#aaa" stroke-width="3"/><path d="M64 8h50" stroke="#ddd" stroke-width="3"/><path d="M63.500 2v12" stroke="#777" stroke-width="3"/></svg>
        <div class="d-flex align-items-center" style="width:60px;height:22px;background:#fff;padding:0 4px 0 6px;margin:0 4px 0 6px">100%<i class="caret ms-auto" style="transform:scale(.8)"></i></div><div class="vsep"></div>
        <svg width="18" height="18" viewBox="0 0 18 18" style="margin:0 5px 0 7px"><path d="M2 7a7 7 0 0112-3M16 11a7 7 0 01-12 3" fill="none" stroke="#4c9fd6" stroke-width="2.600"/><path d="M17 1v6h-6zM1 17v-6h6z" fill="#4c9fd6"/></svg>
      </div>
    </div>
  </section>

  <!-- Geoprocessing pane -->
  <aside class="d-flex flex-column" style="width:319px;margin-left:7px">
    <div class="pane d-flex flex-column" style="height:849px">
      <div class="d-flex align-items-center pane-title" style="padding:0 5px 0 4px">Geoprocessing
        <i class="caret ms-auto"></i><svg class="ms-2" width="10" height="12" style="margin-top:-3px"><use href="#pin"/></svg><svg style="margin-left:7px" width="9" height="9"><use href="#x"/></svg></div>
      <div class="d-flex align-items-center justify-content-between" style="margin:13px 5px 0 5px;font-size:14.500px;letter-spacing:-.08px">
        <svg width="20" height="20" viewBox="0 0 20 20"><circle cx="10" cy="10" r="8.500" fill="#fff" stroke="#777"/><path d="M15 10H6M10 5.500L5.500 10l4.500 4.500" fill="none" stroke="#555" stroke-width="1.800"/></svg><span>Exponential Smoothing Forecast</span>
        <svg width="20" height="20" viewBox="0 0 20 20"><circle cx="10" cy="10" r="8.500" fill="#fff" stroke="#777"/><path d="M4.500 10h11M10 4.500v11" stroke="#555" stroke-width="1.800"/></svg></div>
      <div class="d-flex align-items-center" style="margin:13px 6px 0 8px;font-size:12px;letter-spacing:-.1px"><span style="border-bottom:2px solid var(--blue);line-height:20px;-webkit-text-stroke:.25px;width:69px;padding-top:1px">Parameters</span><span style="margin-left:10px">Environments</span><svg class="i16 ms-auto" viewBox="0 0 16 16"><circle cx="8" cy="8" r="7.500" fill="#dff0fa" stroke="#6db2dd"/><text x="5" y="12.500" font-size="12" font-weight="700" fill="#4c9fd6">?</text></svg></div>
      <div style="margin:11px 7px 0 17px" class="d-flex flex-column">
        <div>Input Space Time Cube</div>
        <div class="d-flex align-items-center"><div class="fld" style="width:266px;padding-left:4px;letter-spacing:0">C:\Users\ericb\OneDrive\Documents\ArcGIS\Pro</div><svg class="ms-auto me-1" width="16" height="12"><use href="#fold"/></svg></div>
        <div style="margin-top:5px">Analysis Variable</div>
        <div class="fld" style="padding:0 2px;letter-spacing:.02px">)IA_AVERAGEANNUALTEMPERATURE_NONE_ZEROS<i class="caret ms-auto" style="border-top-color:#000"></i></div>
        <div class="d-flex justify-content-between" style="margin-top:8px;height:45px"><div style="line-height:15px;margin-top:-4px">Number of Time Steps to<br>Forecast</div><div class="fld justify-content-end pe-1" style="width:146px">1</div></div>
        <div class="d-flex align-items-center"><div class="fld" style="width:266px;padding-left:4px"><span style="width:186px;text-align:right">stc_ExponentialSmoothingForecast</span></div><svg class="ms-auto me-1" width="16" height="12"><use href="#fold"/></svg></div>
        <div style="margin-top:5px;padding-left:6px">Output Space Time Cube</div>
        <div class="d-flex align-items-center"><div class="fld" style="width:266px;padding-left:4px;letter-spacing:0">C:\Users\ericb\OneDrive\Documents\ArcGIS\Pro</div><svg class="ms-auto me-1" width="16" height="12"><use href="#fold"/></svg></div>
        <div class="d-flex justify-content-between" style="margin-top:4px"><div>Model Type</div><div class="fld" style="width:146px"></div></div>
        <div class="d-flex justify-content-between" style="margin-top:8px;height:45px"><div style="line-height:15px;margin-top:-4px">Number of Time Steps to<br>Exclude for Validation</div><div class="fld justify-content-end pe-1" style="width:146px">12</div></div>
        <div class="fld px-1">None<i class="caret ms-auto" style="border-top-color:#000"></i></div>
      </div>
      <div class="d-flex align-items-center ms-auto mt-auto bg-white" style="width:82px;height:24px;border:1px solid #444;margin:0 6px 6px 0;padding:0 3px 0 11px;font-size:12px"><svg class="i16" viewBox="0 0 16 16"><circle cx="8" cy="8" r="7.500" fill="#dff0fa" stroke="#6db2dd"/><path d="M6 4l5 4-5 4z" fill="#3c95cf"/></svg>&nbsp; Run<i class="caret ms-auto" style="transform:scale(.8)"></i></div>
      <div class="d-flex align-items-center" style="height:44px;background:#e3efe3;margin:0 3px 1px;padding:0 7px 0 13px"><svg width="13" height="13" viewBox="0 0 13 13"><circle cx="6.500" cy="6.500" r="6" fill="#5aa05c"/><path d="M3.500 6.500l2.200 2.500 4-5" fill="none" stroke="#fff" stroke-width="1.600"/></svg><div style="margin:-2px 0 0 15px;line-height:19px;letter-spacing:-.03px">Exponential Smoothing Forecast completed.<br><span style="color:#3f8a42">View Details &nbsp;Open History</span></div><svg class="ms-auto" width="9" height="9" opacity=".7"><use href="#x"/></svg></div>
    </div>
    <div class="d-flex align-items-center" style="height:20px;padding-left:5px"><span style="width:47px">Catalog</span><span style="width:89px;height:20px;line-height:19px;text-align:center;background:var(--pane);border:1px solid var(--line);border-top:0;color:var(--blue)">Geoprocessing</span><span style="margin-left:7px">Chart Properties</span></div>
  </aside>
</main>

<!-- Pop-up window -->
<div class="popwin d-flex flex-column">
  <div style="height:5px;background:var(--blue);margin:0 1px"></div>
  <div class="d-flex" style="height:31px;padding:1px 6px 0 6px"><span style="font-size:14.500px;line-height:19px;color:var(--blue);letter-spacing:.1px">Pop-up</span><i class="caret ms-auto" style="margin-top:8px"></i><svg width="9" height="9" style="margin:2px 7px 0 8px"><path d="M.5 1h8v7.500h-8zM0 1.500h9" fill="none" stroke="#444"/></svg><svg width="9" height="9" style="margin-top:3px"><use href="#x"/></svg></div>
  <div class="d-flex align-items-center" style="height:17px;padding-left:7px;letter-spacing:-.03px"><svg class="tw" style="margin-right:7px"><use href="#tri"/></svg>stc_ExponentialSmoothingForecast &nbsp;(1)</div>
  <div style="height:18px;margin:0 2px 0 34px;border:1px solid var(--blue);background:#c6daef;padding-left:2px;line-height:16px">19</div>
  <div style="height:14px;background:#efefef;margin-top:67px"></div>
  <div style="height:24px;line-height:24px;padding-left:5px;font-size:13px;color:var(--blue);border-bottom:1px solid #ccc;letter-spacing:-.03px">stc_ExponentialSmoothingForecast - 19</div>
  <div class="d-flex">
    <svg width="911" height="384" viewBox="785 552 911 384" id="chart" font-family="DejaVu Sans,sans-serif" letter-spacing="0"></svg>
    <div class="d-flex flex-column align-items-center" style="width:8px;height:384px"><i class="caret-up" style="margin-top:2px"></i><div style="width:8px;height:152px;background:#dedede;margin-top:2px"></div><div style="width:8px;height:207px;background:#777"></div><div style="width:8px;height:5px;background:#dedede"></div><i class="caret-dn" style="margin-top:2px"></i></div>
  </div>
  <div class="d-flex align-items-center" style="height:8px;padding-left:3px"><i class="caret-lt"></i><div style="width:878px;height:8px;margin-left:2px;background:#777"></div><div style="width:8px;height:8px;background:#dedede;margin-right:2px"></div><i class="caret-rt"></i></div>
  <div class="d-flex align-items-center" style="height:20px;padding:0 6px 0 4px;border-top:1px solid #ccc"><i class="caret-lt" style="opacity:.6"></i><span style="margin:0 5px">1 of 1</span><i class="caret-rt" style="opacity:.6"></i>
    <span class="bg-white" style="margin:0 auto 0 328px;line-height:18px;letter-spacing:-.25px">&nbsp;0.0008389°E 0.0001957°N</span>
    <svg width="66" height="13" viewBox="0 0 66 13"><path d="M3 5V1h6v4M1 5h10v4H1zM3 9h6v3H3z" fill="#ccc" stroke="#555"/><path d="M18.500 1.500h10v10h-10zM21 2l3 4-1 5M24 6l4-3" fill="#dcecf8" stroke="#555"/><g stroke="#e07a5a"><circle cx="42" cy="6.500" r="3.500" fill="#fbe4dc"/><path d="M42 0v2M42 11v2M36 6.500h2M46 6.500h2M38 2.500l1 1M46 2.500l-1 1M38 10.500l1-1M46 10.500l-1-1"/></g><circle cx="42" cy="6.500" r="1.500" fill="#555"/><circle cx="58.500" cy="5" r="4" fill="#e8f4fb" stroke="#4c9fd6" stroke-width="1.500"/><path d="M61.500 8l4 4.500" stroke="#8a6b48" stroke-width="2"/></svg>
  </div>
</div>

<!-- Taskbar -->
<footer class="taskbar d-flex align-items-center" style="flex:none">
  <div class="d-flex" style="margin-left:609px">
    <div class="tb"><svg viewBox="0 0 24 24"><path d="M0 0h11.500v11.500H0zM12.500 0H24v11.500H12.500zM0 12.500h11.500V24H0zM12.500 12.500H24V24H12.500z" fill="#4cc4f8"/></svg></div>
    <div class="tb"><svg viewBox="0 0 24 24"><path d="M6 1h18v16H6z" fill="#f2f2f2"/><path d="M0 7h18v15H0z" fill="#777" opacity=".85"/></svg></div>
    <div class="tb"><svg viewBox="0 0 24 24"><path d="M0 1h24v22H0z" fill="#0a63b5"/><path d="M2 3h8v18H2z" fill="#fff"/><path d="M12 3h10v9H12z" fill="#6cc5f5"/><path d="M12 14h10v7H12z" fill="#2e9be8"/></svg></div>
    <div class="tb"><svg viewBox="0 0 24 24"><path d="M7 5V1h10v4" stroke="#3cc0f0" stroke-width="2" fill="none"/><path d="M1 5h22v17q0 2-2 2H3q-2 0-2-2z" fill="#f4f4f4"/><path d="M7 9h4.500v4.500H7z" fill="#f25022"/><path d="M12.500 9H17v4.500h-4.500z" fill="#7fba00"/><path d="M7 14.500h4.500V19H7z" fill="#00a4ef"/><path d="M12.500 14.500H17V19h-4.500z" fill="#ffb900"/></svg></div>
    <div class="tb run"><svg viewBox="0 0 24 24"><path d="M0 1h8l3 3h13v6H0z" fill="#d99a12"/><path d="M0 5h24v17H0z" fill="#fbd25a"/><path d="M4 15h16v7H4z" fill="#1778d0"/><path d="M8 19h8v3H8z" fill="#0e5ba8"/></svg></div>
    <div class="tb run"><svg viewBox="0 0 24 24"><circle cx="12" cy="12" r="11" fill="#34a853"/><path d="M2.500 6.500A11 11 0 0122 7H12a5 5 0 00-4.500 7z" fill="#ea4335"/><path d="M22 7a11 11 0 01-10 16l5-9a5 5 0 00-1-7z" fill="#fbbc05"/><circle cx="12" cy="12" r="5" fill="#fff"/><circle cx="12" cy="12" r="4" fill="#4285f4"/></svg></div>
    <div class="tb"><svg viewBox="0 0 24 24"><path d="M0 0h24v24H0z" fill="#0c0c0e"/><path d="M0 1l3 9v9l-1 5L0 21zM24 1l-3 9v9l1 5 2-3z" fill="#b51a20"/><path d="M5 5l4 6 1 3 1-3h2l1 3 1-3 4-6v11l-4 5 0-6-3 6-3-6 0 6-4-5z" fill="#7d7d82"/></svg></div>
    <div class="tb"><svg viewBox="0 0 24 24"><path d="M0 0h24v24H0z" fill="#232323"/><path d="M9 3h3v6H9a3 3 0 010-6z" fill="#f24e1e"/><path d="M12 3h3a3 3 0 010 6h-3z" fill="#ff7262"/><path d="M9 9h3v6H9a3 3 0 010-6z" fill="#a259ff"/><circle cx="15" cy="12" r="3" fill="#1abcfe"/><path d="M9 15h3v3a3 3 0 11-3-3z" fill="#0acf83"/></svg></div>
    <div class="tb"><svg viewBox="0 0 24 24"><rect x="1" y="1" width="22" height="22" rx="4" fill="#001e36"/><text x="5" y="16" font-size="11" font-weight="700" fill="#31a8ff">Ps</text></svg></div>
    <div class="tb"><svg viewBox="0 0 24 24"><path d="M17 0l7 3v18l-7 3L4 12z" fill="#2aa3ea"/><path d="M17 6v12L9 12z" fill="#2c2714"/><path d="M0 8l2-2 16 14-1 4zM0 16l2 2L17 5V0z" fill="#0f79c8"/></svg></div>
    <div class="tb run"><svg viewBox="0 0 24 24" style="overflow:visible"><circle cx="13" cy="6" r="4" fill="#7b83eb"/><path d="M9 8h14v9a7 7 0 01-14 2z" fill="#5f68d8"/><rect x="-1" y="6" width="13" height="13" rx="1" fill="#4b53bc"/><text x="2" y="16" font-size="10" font-weight="700" fill="#fff">T</text><circle cx="20" cy="3" r="7" fill="#d5173f"/><text x="17.500" y="7" font-size="10" fill="#fff">1</text></svg></div>
    <div class="tb"><svg viewBox="0 0 24 24"><path d="M2 2l16-1 4 3v18l-16 1-4-4z" fill="#fff" stroke="#111" stroke-width="1.500"/><path d="M5 5l17-1" stroke="#111"/><text x="7" y="20" font-family="Liberation Serif,serif" font-weight="700" font-size="17" fill="#111">N</text></svg></div>
    <div class="tb"><svg viewBox="0 0 24 24"><circle cx="12" cy="12" r="12" fill="#1ed760"/><path d="M5 8.500q8-2.500 14 1M6 12.500q7-2 12 1M6.500 16q6-1.500 10 1" fill="none" stroke="#14301a" stroke-width="2" stroke-linecap="round"/></svg></div>
    <div class="tb run"><svg viewBox="0 0 24 24"><path d="M1 1h22v12L13 23H1z" fill="#fdd400"/><path d="M12 13h11v10H12z" fill="#4a4a4a"/><path d="M12 23l11-10H14z" fill="#2d2d2d"/></svg></div>
    <div class="tb run"><svg viewBox="0 0 24 24"><circle cx="12" cy="12" r="12" fill="#1481d2"/><path d="M1 9C4-3 22-2 24 10c0 5-5 7-9 5 3-4-1-9-6-8-4 0-7 2-8 2z" fill="#3fd08c"/><path d="M1 9C4-3 18-2 20 6 12 0 5 5 1 9z" fill="#2fb8e0"/><path d="M9 10c-3 6 3 12 11 10-8 7-17 2-15-5 1-3 2-4 4-5z" fill="#0c4f9a"/></svg></div>
    <div class="tb run on"><svg viewBox="0 0 24 24"><path d="M12 0l10.500 6v12L12 24 1.500 18V6z" fill="#1173e0"/><circle cx="12" cy="12" r="7" fill="#fff"/><path d="M8 7l4 1-1 4-3 1zM13 8l4 1v5l-3 3-1-4z" fill="#1173e0"/></svg></div>
  </div>
  <svg width="12" height="8" viewBox="0 0 12 8" style="margin-left:358px"><path d="M1 7l5-5 5 5" fill="none" stroke="#fff" stroke-width="1.300"/></svg>
  <div class="text-center" style="width:56px;line-height:16px">ENG<br>IN</div>
  <svg width="64" height="16" viewBox="0 0 64 16" style="margin-left:2px"><g fill="none" stroke="#fff"><path d="M1 6q6.500-6 13 0M3 9q4.500-4 9 0" stroke-width="1.400"/><circle cx="7.500" cy="11.500" r="1.500" fill="#fff"/><path d="M24 6h3l4-4v11l-4-4h-3zM33 5q2 2.500 0 5M35.500 3q3.500 4.500 0 9"/><rect x="48.500" y="4" width="13" height="8" rx="1.500"/><path d="M63 7v2"/></g><path d="M50 5.500h6v5h-6z" fill="#fff"/></svg>
  <div class="text-end ms-auto" style="line-height:16px;margin-right:8px;letter-spacing:-.35px">15:23<br>01-12-2021</div>
  <svg width="14" height="15" viewBox="0 0 14 15" style="margin-right:21px"><path d="M7 1q7 3 5 9-3 5-10 3 8-3 5-12z" fill="none" stroke="#fff" stroke-width="1.200"/></svg>
</footer>

<script>
// Contents tree
const icon = (id, w = 16, h = 16, s = '') => `<svg width="${w}" height="${h}" style="${s}"><use href="#${id}"/></svg>`;
const layer = (name, open, checked) => `<div class="toc-row" style="padding-left:11px">${open === null ? '<i style="width:7px"></i>' : icon(open ? 'tri' : 'tro', 7, open ? 7 : 9)}<span class="chk">${checked ? icon('ck', 12, 12) : ''}</span>${name}</div>`;
let toc = `<div class="toc-row">${icon('tri', 7, 7, 'margin-right:4px')}${icon('mapi')}<span style="margin-left:5px">Map</span></div>`;
toc += layer('stc_ExponentialSmoothingForecast', true, true);
toc += '<div class="toc-row" style="height:22px;padding-left:25px;letter-spacing:-.02px">Forecast for ANNUALTEMPERATUREINDIA_AVERAGE</div>';
[['#f2eff8', '-0.770346 - 4.747848'], ['#bcd5e8', '4.747849 - 14.524666'], ['#6bacd6', '14.524667 - 21.770096'], ['#3181bd', '21.770097 - 24.96342'], ['#08519c', '24.963421 - 27.0']]
  .forEach(([c, t]) => toc += `<div class="toc-row" style="height:17px;padding-left:26px"><i class="dot" style="background:${c}"></i>${t}</div>`);
toc += '<div style="height:3px"></div>' + layer('stc_VisualizeSpaceTimeCube3D', false, false) + layer('IND_adm1', true, true);
toc += '<div class="toc-row" style="height:20px;margin:1px 0 1px 23px;background:#c6daef;border:1px solid var(--blue);border-right:0;padding-left:2px">ID_1 / AverageAnnualTemperature</div>';
[['#f5f500', '-533.3'], ['#f5da00', '-533.2 - -250'], ['#f5bf00', '-249.9 - -33.68'], ['#f5a300', '-33.67 - -15.02'], ['#f58800', '-15.01 - -6.000'], ['#f56d00', '-5.999 - 0.4628'], ['#f55200', '0.4629 - 0.9464'], ['#f53600', '0.9465 - 1.604'], ['#f51b00', '1.605 - 2.776'], ['#f50000', '2.777 - 8.798']]
  .forEach(([c, t]) => toc += `<div class="toc-row" style="height:20px;padding-left:26px"><i class="swatch" style="background:${c}"></i>${t}</div>`);
toc += '<div class="toc-row" style="margin-top:3px;padding-left:33px;font-weight:600">Charts</div>';
toc += `<div class="toc-row" style="padding-left:33px">${icon('line')}<span style="margin-left:10px">Change in &nbsp;AverageAnnualTemperature over Y</span></div>`;
toc += '<div style="margin-top:-1px"></div>' + layer('IND_adm1_FeatureVerticesToPo1', false, false) + layer('IND_adm1_FeatureVerticesToPo', false, false) + layer('World Topographic Map', null, true) + layer('World Hillshade', null, true);
toc += `<div class="toc-row" style="padding-left:11px">${icon('tri', 7, 7, 'margin-right:4px')}Standalone Tables</div>`;
['GlobalLandTemperatures_GlobalLandTemperatures', 'tas_timeseries_annual_cru_1901-2020_IND.csv', 'AnnualTemperatureIndia', 'AnnualTempIndia.csv', 'IND_adm1.csv']
  .forEach(t => toc += `<div class="toc-row" style="padding-left:22px;letter-spacing:-.15px">${icon('tbl', 16, 16, 'margin-right:6px')}${t}</div>`);
document.getElementById('toc').innerHTML = toc;

// Attribute table
let g = '<div style="background:#fff;justify-content:flex-end;padding:0 2px">' + icon('tri', 9, 9, 'opacity:.3') + '</div><div style="padding:0;border-bottom:0;background:#fff"></div><div style="background:#c9e2f5;box-shadow:inset 0 -2px var(--blue);padding-left:6px">OBJECTID *</div>' + ['Shape *', 'Location ID', 'ORIG_FID', 'Forecast for ANNUALTEMPERATUREINDIA_AVERAGEANNUALTEMPERATURE_NONE_ZEROS', ''].map(t => `<div style="background:#ececec;padding-left:6px">${t}</div>`).join('');
[3, 6, 7, 8, 10, 13, 14, 15, 16].forEach((f, i) => {
  const bg = i % 2 ? '#ebebeb' : '#fff', end = `background:${bg};justify-content:flex-end`;
  g += `<div style="padding:0;justify-content:center;${i ? 'background:#ececec;color:#777' : 'background:#c9e2f5;box-shadow:inset -2px 0 var(--blue)'}">${i + 1}</div><div style="padding:0;border-bottom:0;background:#fff"></div>`;
  g += `<div style="background:${i ? bg : '#e3f1fc'}">${i + 1}</div><div style="background:${bg}">Point</div><div style="${end}">${i}</div><div style="${end}">${f}</div><div style="${end}">${i === 8 ? '24.985276' : ''}</div><div style="background:${bg}"></div>`;
});
document.getElementById('attr').innerHTML = g;

// Forecast chart: samples are depths below the top of the pop-up frame, one for each year from 1901
const orig = [994,932,1091,1106,1171,1090,1134,1059,1155,1186,1081,1072,1174,1106,947,1093,1369,1094,1174,1059,883,1056,1016,1013,1193,1196,1189,991,1056,1109,991,991,1264,1149,1152,1196,1214,1065,1075,1087,790,969,1013,1078,1171,969,916,994,979,1164,966,908,824,975,1084,1059,1100,839,979,1000,1162,1078,1078,1037,1037,920,1087,1131,920,1013,1245,1047,997,1031,1140,1056,1044,1131,947,920,1047,1106,1214,1037,935,1124,916,895,1121,1068,1020,1062,969,981,960,911,1205,911,826,870,852,756,870,765,889,768,805,889,647,635,876,876,947,939,876,656,749,793,911,947];
const fit = [1022,1030,1025,1046,1063,1088,1096,1106,1105,1118,1131,1127,1121,1130,1128,1100,1099,1143,1137,1143,1131,1090,1084,1071,1060,1080,1100,1115,1095,1090,1092,1075,1060,1093,1104,1111,1126,1141,1131,1123,1117,1062,1046,1038,1042,1062,1047,1024,1018,1010,1034,1023,1002,972,970,988,999,1016,987,985,986,1015,1026,1037,1037,1037,1019,1030,1047,1026,1024,1061,1060,1050,1048,1063,1063,1061,1072,1052,1029,1032,1043,1072,1067,1047,1059,1035,1011,1027,1034,1032,1036,1025,1018,1008,991,1025,1006,976,956,937,905,897,872,871,852,841,847,812,780,792,804,828,845,851,819,807,803,820];
const X = i => +(848.8 + i * 6.6875).toFixed(1), Y = v => +(370 + v / 2.6133).toFixed(1);
const poly = (a, c, w, d = '') => `<polyline points="${a.map((v, i) => X(i) + ',' + Y(v)).join(' ')}" fill="none" stroke="${c}" stroke-width="${w}" stroke-dasharray="${d}"/>` + a.map((v, i) => `<circle cx="${X(i)}" cy="${Y(v)}" r="2.5" fill="${c}"/>`).join('');
let s = '<path d="M799.500 545h891v20h-891zM1432.500 552v13" fill="#e1e1e1" stroke="#c3c3c3"/><text x="803" y="557" font-family="Open Sans,sans-serif" font-size="11.500" fill="#555" textLength="137">Time Series HTML Pop-Up</text>';
s += '<g font-size="12.500" fill="#7c7c7c"><text x="816" y="592" font-weight="700" textLength="126">Forecast Method:</text><text x="947" y="592" textLength="338">Exponential Smoothing; seasonality:auto_detect(1)</text></g>';
s += '<text transform="translate(800.500 600) rotate(-90)" text-anchor="end" font-size="9.500" font-style="italic" fill="#555" textLength="352">ANNUALTEMPERATUREINDIA_AVERAGEANNUALTEMPERATURE_NONE</text>';
s += '<path d="M849 612v282" stroke="#999" fill="none"/><path d="M849 894.500h802" stroke="#aaa" stroke-width="1.500"/>';
['26.60','26.40','26.20','26','25.80','25.60','25.40','25.20','25','24.80','24.60','24.40'].forEach((t, i) => s += `<text x="836" y="${(621 + i * 23.64).toFixed(1)}" text-anchor="end" font-size="9.5" fill="#555" textLength="${t.length > 2 ? 29 : 13}">${t}</text>`);
for (let i = 0; i <= 120; i += 20) s += `<path d="M${X(i)} 894v4" stroke="#888"/><text x="${X(i)}" y="913" text-anchor="middle" font-size="9.5" fill="#555" textLength="25">${1901 + i}</text>`;
s += `<path d="M${X(119)} ${Y(947)}L${X(120)} ${Y(640)}V${Y(1045)}z" fill="#f9dcd5"/><path d="M1644.500 611v282" stroke="#777" stroke-dasharray="3 3"/>`;
s += poly(orig, '#1b74d4', 2) + poly(fit, '#f26b4b', 1.5, '3 1');
s += `<path d="M${X(119)} ${Y(947)}L${X(120)} ${Y(842)}" stroke="#f26b4b" stroke-width="1.8"/><circle cx="${X(119)}" cy="${Y(947)}" r="2.5" fill="#f26b4b"/><circle cx="${X(120)}" cy="${Y(842)}" r="2.5" fill="#f26b4b"/>`;
[[1036,'#1b74d4','Original Value',1045,70],[1128,'#f26b4b','Fitted Value',1137,59],[0,'','Confidence Interval',1218,99],[1330,'#f26b4b','Forecasted Value',1339,85]].forEach(([x, c, t, tx, w]) => {
  s += x ? `<path d="M${x - 5} 930h10" stroke="${c}" stroke-width="1.500"/><circle cx="${x}" cy="930" r="2.300" fill="${c}"/>` : '<path d="M1204 925h10v10h-10z" fill="#f7dcd6"/>';
  s += `<text x="${tx}" y="933.500" font-size="9.500" fill="#555" textLength="${w}">${t}</text>`;
});
document.getElementById('chart').innerHTML = s;
</script>
</body>
</html>
